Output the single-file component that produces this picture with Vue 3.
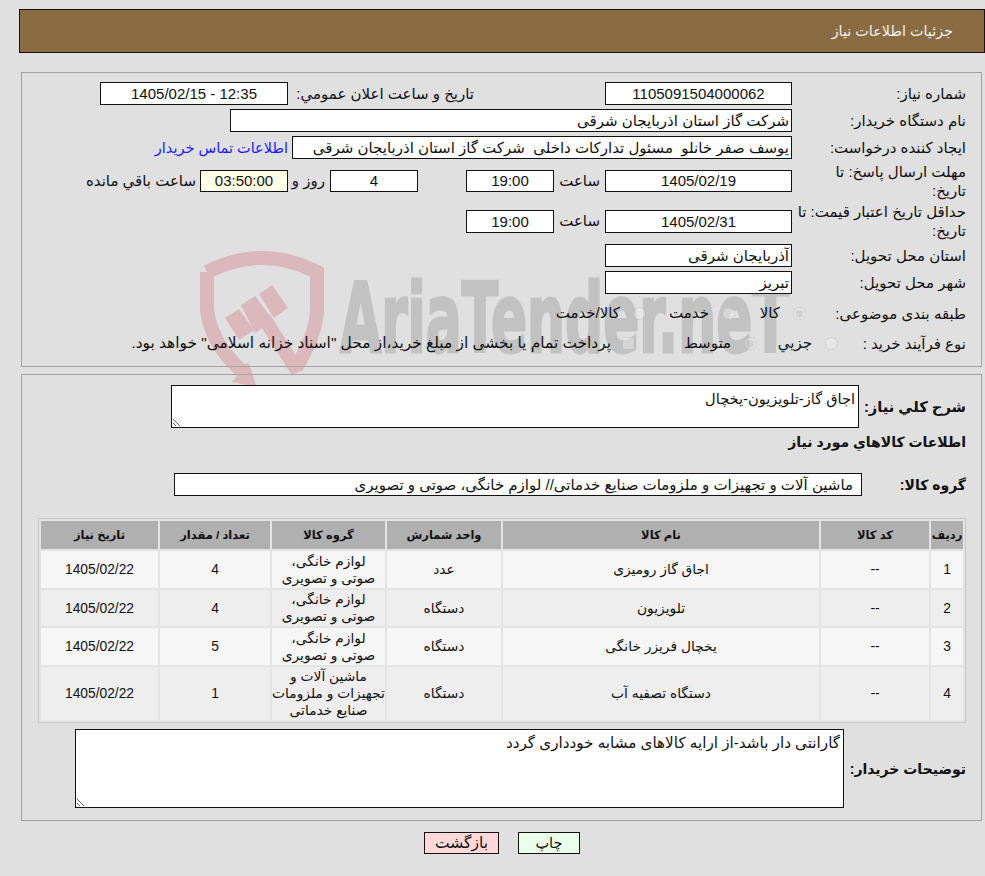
<template>
  <div class="page" dir="rtl">
    <svg class="watermark" dir="ltr" width="985" height="460" viewBox="0 0 985 460" xmlns="http://www.w3.org/2000/svg">
      <g fill="none" stroke="#dab8bb" stroke-width="14">
        <path d="M207 272 Q262 244 317 272 V310 Q316 335 296 368" />
        <path d="M207 272 V310 Q212 348 248 376" />
        <path d="M264 318 L298 372" />
      </g>
      <g fill="#dab8bb">
        <polygon points="225,318 239,309 254,330 239,340" />
        <polygon points="241,305 255,296 273,320 255,333" />
        <polygon points="259,294 272,285 288,308 274,318" />
        <polygon points="248,362 257,387 232,382" />
      </g>
      <text class="mark-text" transform="translate(340 352) scale(0.555 1)" font-family="DejaVu Sans" font-weight="bold" font-size="96" fill="#c2c2c2" stroke="#c2c2c2" stroke-width="3">AriaTender.neT</text>
    </svg>

    <div class="content">
      <div class="title-bar">جزئیات اطلاعات نیاز</div>

      <section class="panel info-panel">
        <div class="row row-std">
          <div class="label">شماره نیاز:</div>
          <div class="box w187">1105091504000062</div>
          <div class="label-inline public-date">تاریخ و ساعت اعلان عمومي:</div>
          <div class="box w188">12:35 - 1405/02/15</div>
        </div>
        <div class="row row-std">
          <div class="label">نام دستگاه خریدار:</div>
          <div class="box text-box w562">شرکت گاز استان اذربایجان شرقی</div>
        </div>
        <div class="row row-std">
          <div class="label">ایجاد کننده درخواست:</div>
          <div class="box text-box w500">یوسف صفر خانلو&nbsp; مسئول تدارکات داخلی&nbsp; شرکت گاز استان اذربایجان شرقی</div>
          <a class="contact-link" href="#">اطلاعات تماس خریدار</a>
        </div>
        <div class="row row-tall">
          <div class="label">مهلت ارسال پاسخ: تا<br />تاریخ:</div>
          <div class="box w187 short">1405/02/19</div>
          <div class="label-inline hour">ساعت</div>
          <div class="box w88 short">19:00</div>
          <div class="box w88 short days">4</div>
          <div class="label-inline day-text">روز و</div>
          <div class="box w88 short remain">03:50:00</div>
          <div class="label-inline remain-text">ساعت باقي مانده</div>
        </div>
        <div class="row row-tall">
          <div class="label">حداقل تاریخ اعتبار قیمت: تا<br />تاریخ:</div>
          <div class="box w187">1405/02/31</div>
          <div class="label-inline hour">ساعت</div>
          <div class="box w88">19:00</div>
        </div>
        <div class="row row-std province">
          <div class="label">استان محل تحویل:</div>
          <div class="box text-box w187">آذربایجان شرقی</div>
        </div>
        <div class="row row-std">
          <div class="label">شهر محل تحویل:</div>
          <div class="box text-box w187">تبریز</div>
        </div>
        <div class="row row-opts cat-row">
          <div class="label cat-label">طبقه بندی موضوعی:</div>
          <label class="opt w71"><input type="radio" name="cat" checked disabled /><span>کالا</span></label>
          <label class="opt w89"><input type="radio" name="cat" disabled /><span>خدمت</span></label>
          <label class="opt"><input type="radio" name="cat" disabled /><span>کالا/خدمت</span></label>
        </div>
        <div class="row row-opts buy-row">
          <div class="label buy-label">نوع فرآیند خرید :</div>
          <label class="opt w81"><input type="radio" name="buy" disabled /><span>جزیي</span></label>
          <label class="opt w122"><input type="radio" name="buy" checked disabled /><span>متوسط</span></label>
          <label class="opt"><input type="checkbox" disabled /><span class="pay-text">پرداخت تمام یا بخشی از مبلغ خرید،از محل "اسناد خزانه اسلامی" خواهد بود.</span></label>
        </div>
      </section>

      <section class="panel goods-panel">
        <div class="row summary-row">
          <div class="label-bold summary-label">شرح کلي نیاز:</div>
          <textarea class="note summary-note" readonly :value="summary"></textarea>
        </div>
        <div class="label-bold goods-title">اطلاعات کالاهاي مورد نیاز</div>
        <div class="row group-row">
          <div class="label-bold group-label">گروه کالا:</div>
          <div class="box text-box group-box">ماشین آلات و تجهیزات و ملزومات صنایع خدماتی// لوازم خانگی، صوتی و تصویری</div>
        </div>

        <table class="goods-table">
          <colgroup>
            <col style="width: 32px" />
            <col style="width: 108px" />
            <col style="width: 316px" />
            <col style="width: 114px" />
            <col style="width: 113px" />
            <col style="width: 110px" />
            <col style="width: 117px" />
          </colgroup>
          <thead>
            <tr>
              <th v-for="h in headers" :key="h">{{ h }}</th>
            </tr>
          </thead>
          <tbody>
            <tr v-for="(item, i) in items" :key="i" :class="i % 2 ? 'even' : 'odd'" :style="{ height: item.h + 'px' }">
              <td>{{ i + 1 }}</td>
              <td>--</td>
              <td>{{ item.name }}</td>
              <td>{{ item.unit }}</td>
              <td class="group-cell">{{ item.group }}</td>
              <td>{{ item.qty }}</td>
              <td>1405/02/22</td>
            </tr>
          </tbody>
        </table>

        <div class="row buyer-row">
          <div class="label-bold buyer-label">توضیحات خریدار:</div>
          <textarea class="note buyer-note" readonly :value="buyerNote"></textarea>
        </div>
      </section>

      <div class="actions">
        <button class="btn print-btn" type="button">چاپ</button>
        <button class="btn back-btn" type="button">بازگشت</button>
      </div>
    </div>
  </div>
</template>

<script setup>
const summary = 'اجاق گاز-تلویزیون-یخچال'
const buyerNote = 'گارانتی دار باشد-از ارایه کالاهای مشابه خودداری گردد'

const headers = ['ردیف', 'کد کالا', 'نام کالا', 'واحد شمارش', 'گروه کالا', 'تعداد / مقدار', 'تاریخ نیاز']

const homeGroup = 'لوازم خانگی،\nصوتی و تصویری'

const items = [
  { name: 'اجاق گاز رومیزی', unit: 'عدد', group: homeGroup, qty: 4, h: 37 },
  { name: 'تلویزیون', unit: 'دستگاه', group: homeGroup, qty: 4, h: 36 },
  { name: 'یخچال فریزر خانگی', unit: 'دستگاه', group: homeGroup, qty: 5, h: 37 },
  { name: 'دستگاه تصفیه آب', unit: 'دستگاه', group: 'ماشین آلات و\nتجهیزات و ملزومات\nصنایع خدماتی', qty: 1, h: 53 }
]
</script>

<style>
html,
body {
  background: #e0e0e0;
}
</style>

<style scoped>
.page {
  position: relative;
  width: 985px;
  height: 876px;
  overflow: hidden;
  font-family: "Liberation Sans", "DejaVu Sans", sans-serif;
  font-size: 15px;
  color: #111;
}

.watermark {
  position: absolute;
  left: 0;
  top: 0;
}

.mark-text {
  direction: ltr;
}

.content {
  position: relative;
  padding: 9px 0 0 19px;
}

.title-bar {
  height: 42px;
  line-height: 42px;
  padding-right: 31px;
  background: #8b6c42;
  border: 1px solid #111;
  color: #f0f0f0;
  font-size: 14.4px;
}

.panel {
  margin: 0 3px 0 2px;
  border: 1px solid #a3a3a3;
}

.info-panel {
  height: 284px;
  margin-top: 19px;
  padding-top: 9px;
}

.goods-panel {
  height: 445px;
  margin-top: 7px;
}

.row {
  display: flex;
  align-items: center;
  margin-right: 15px;
}

.row-std {
  height: 23px;
  margin-bottom: 4px;
}

.row-tall {
  height: 36px;
  margin-bottom: 4px;
}

.province {
  margin-top: 5px;
}

.row-opts {
  height: 20px;
}

.cat-row {
  margin-top: 9px;
}

.buy-row {
  margin-top: 10px;
}

.label {
  width: 174px;
  flex: none;
  line-height: 19px;
  white-space: nowrap;
}

.label-inline {
  flex: none;
  white-space: nowrap;
}

.box {
  flex: none;
  box-sizing: border-box;
  height: 23px;
  line-height: 21px;
  border: 1px solid #111;
  background: #fff;
  text-align: center;
  white-space: nowrap;
  overflow: hidden;
}

.box.short {
  height: 22px;
  line-height: 20px;
}

.text-box {
  text-align: right;
  padding: 0 2px;
}

.w187 { width: 187px; }
.w188 { width: 188px; }
.w88 { width: 88px; }
.w562 { width: 562px; }
.w500 { width: 500px; }

.public-date {
  width: 186px;
  margin-right: 131px;
}

.contact-link {
  margin-right: 4px;
  color: #1a1aff;
  font-size: 14.5px;
  text-decoration: none;
  white-space: nowrap;
}

.hour {
  width: 46px;
  margin-right: 5px;
}

.days {
  margin-right: 48px;
}

.day-text {
  margin-right: 5px;
  width: 37px;
}

.remain {
  background: #ffffe8;
}

.remain-text {
  margin-right: 4px;
}

.cat-label {
  width: 160px;
}

.buy-label {
  width: 128px;
}

.opt {
  display: flex;
  align-items: center;
  flex: none;
  white-space: nowrap;
}

.opt input {
  margin: 0 0 0 13px;
  opacity: 0.55;
}

.w71 { width: 71px; }
.w81 { width: 81px; }
.w89 { width: 89px; }
.w122 { width: 122px; }

.pay-text {
  margin-right: -2px;
  font-size: 15.4px;
}

.label-bold {
  flex: none;
  font-weight: bold;
  font-size: 14px;
  white-space: nowrap;
}

.summary-row {
  padding-top: 10px;
}

.summary-label {
  width: 107px;
  font-size: 14.7px;
}

.note {
  display: block;
  box-sizing: border-box;
  border: 1px solid #111;
  background: #fff;
  border-radius: 0;
  outline: none;
  font-family: inherit;
  font-size: 14.6px;
  color: #111;
  padding: 4px 3px 2px;
  margin: 0;
  direction: rtl;
}

.summary-note {
  width: 688px;
  height: 43px;
}

.goods-title {
  margin: 4px 15px 0 0;
  height: 21px;
  line-height: 21px;
}

.group-row {
  margin-top: 20px;
}

.group-label {
  width: 104px;
}

.group-box {
  width: 688px;
  padding-right: 8px;
}

.goods-table {
  width: 928px;
  margin: 22px 15px 0 0;
  table-layout: fixed;
  border-collapse: separate;
  border-spacing: 2px;
  border: 1px solid #c8c8c8;
  background: #e4e4e4;
}

.goods-table th {
  height: 28px;
  padding: 0;
  background: #b0b0b0;
  font-size: 11.5px;
  font-weight: bold;
  text-align: center;
}

.goods-table td {
  padding: 0;
  text-align: center;
  line-height: 17px;
  font-size: 13.8px;
}

.goods-table .group-cell {
  white-space: pre-line;
}

.odd td {
  background: #f6f6f6;
}

.even td {
  background: #eeeeee;
}

.buyer-row {
  margin-top: 6px;
}

.buyer-label {
  width: 122px;
}

.buyer-note {
  width: 769px;
  height: 79px;
  font-size: 15.2px;
}

.actions {
  display: flex;
  justify-content: center;
  gap: 19px;
  margin-top: 11px;
}

.btn {
  height: 22px;
  padding: 0;
  border: 1px solid #111;
  font-family: inherit;
  font-size: 14.5px;
  color: #111;
  line-height: 20px;
}

.print-btn {
  width: 62px;
  background: #eaffea;
}

.back-btn {
  width: 75px;
  background: #ffd9d9;
  font-size: 15.5px;
}
</style>
